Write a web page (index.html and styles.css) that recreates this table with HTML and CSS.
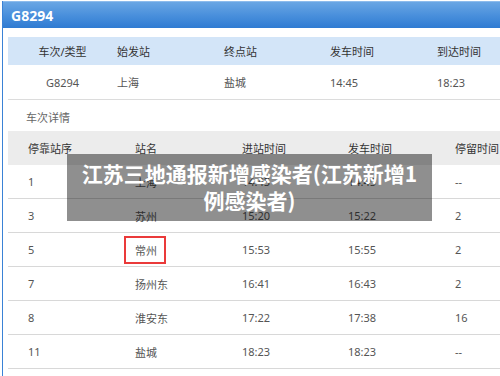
FILE: index.html
```html
<!DOCTYPE html>
<html lang="zh-CN">
<head>
<meta charset="utf-8">
<title>G8294</title>
<link rel="stylesheet" href="styles.css">
</head>
<body>
<div class="panel">
  <div class="hd">G8294</div>
  <div class="content">
    <div class="grid top">
      <div class="row th">
        <div class="c first">车次/类型</div><div class="c">始发站</div><div class="c">终点站</div><div class="c">发车时间</div><div class="c">到达时间</div>
      </div>
      <div class="row td">
        <div class="c first">G8294</div><div class="c">上海</div><div class="c">盐城</div><div class="c">14:45</div><div class="c">18:23</div>
      </div>
    </div>
    <div class="sect">车次详情</div>
    <div class="grid stops">
      <div class="row th">
        <div class="c">停靠站序</div><div class="c">站名</div><div class="c">进站时间</div><div class="c">发车时间</div><div class="c">停留时间</div>
      </div>
      <div class="row td"><div class="c">1</div><div class="c">上海</div><div class="c">14:45</div><div class="c">14:45</div><div class="c">--</div></div>
      <div class="row td"><div class="c">3</div><div class="c">苏州</div><div class="c">15:20</div><div class="c">15:22</div><div class="c">2</div></div>
      <div class="row td"><div class="c">5</div><div class="c"><span class="mark">常州</span></div><div class="c">15:53</div><div class="c">15:55</div><div class="c">2</div></div>
      <div class="row td"><div class="c">7</div><div class="c">扬州东</div><div class="c">16:41</div><div class="c">16:43</div><div class="c">2</div></div>
      <div class="row td"><div class="c">8</div><div class="c">淮安东</div><div class="c">17:22</div><div class="c">17:38</div><div class="c">16</div></div>
      <div class="row td"><div class="c">11</div><div class="c">盐城</div><div class="c">18:23</div><div class="c">18:23</div><div class="c">--</div></div>
    </div>
  </div>
</div>
<div class="caption">江苏三地通报新增感染者(江苏新增1例感染者)</div>
</body>
</html>
```
FILE: styles.css
```css
html, body {
  margin: 0;
  padding: 0;
  background: #fff;
  overflow: hidden;
}
body {
  width: 500px;
  height: 376px;
  position: relative;
  font-family: "Noto Sans", "Noto Sans CJK SC", sans-serif;
  font-size: 11px;
  color: #555;
}
.panel {
  margin: 1px 0 0 2px;
  border-left: 1px solid #3a82d6;
  height: 375px;
  overflow: hidden;
}
.hd {
  height: 27px;
  line-height: 27px;
  padding-left: 8px;
  background: linear-gradient(#6aa6e4, #4a90dc 50%, #2f7bd2);
  border-top: 1px solid #8dbbec;
  box-sizing: border-box;
  color: #fff;
  font-weight: bold;
  font-size: 14px;
}
.content {
  padding: 9px 0 0 5px;
}
.grid .row {
  display: grid;
  align-items: center;
}
.top .row {
  grid-template-columns: 109px 107px 106px 107px 1fr;
}
.top .th {
  height: 28px;
  background: #d3e5f8;
  color: #333;
}
.top .td {
  height: 34px;
  border-bottom: 1px solid #dcdcdc;
}
.top .first {
  text-align: center;
}
.sect {
  padding: 10px 0 5px 18px;
  line-height: 16px;
  color: #666;
}
.stops .row {
  grid-template-columns: 107px 107px 106px 107px 1fr;
}
.stops .c {
  padding-left: 20px;
}
.stops .th {
  height: 34px;
  background: #ececec;
  color: #333;
}
.stops .td {
  height: 33px;
  border-bottom: 1px solid #d8d8d8;
}
.mark {
  position: relative;
}
.mark::after {
  content: "";
  position: absolute;
  left: -11px;
  right: -9px;
  top: -7px;
  bottom: -6px;
  border: 2px solid #ea3a3a;
}
.caption {
  position: absolute;
  left: 67px;
  top: 154px;
  width: 365px;
  height: 67px;
  box-sizing: border-box;
  padding: 6px 12px 0;
  background: rgba(0, 0, 0, 0.44);
  color: #fff;
  font-family: "Noto Sans CJK SC", sans-serif;
  font-weight: bold;
  font-size: 21px;
  line-height: 27px;
  text-align: center;
}
```
